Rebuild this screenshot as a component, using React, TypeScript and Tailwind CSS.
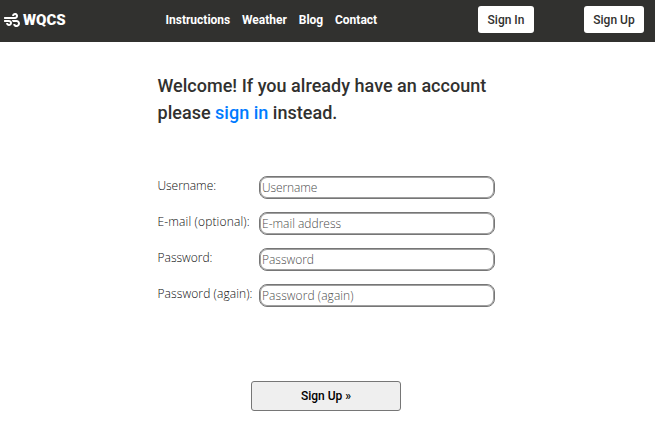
import React from "react";
import { FaWind } from "react-icons/fa";

const links = ["Instructions", "Weather", "Blog", "Contact"];

const fields = [
  { label: "Username:", hint: "Username", type: "text", id: "username", labelSpacing: "tracking-[-0.05px]", hintSpacing: "placeholder:tracking-[-0.1px]" },
  { label: "E-mail (optional):", hint: "E-mail address", type: "email", id: "email", labelSpacing: "tracking-[0.15px]", hintSpacing: "placeholder:tracking-[0px]" },
  { label: "Password:", hint: "Password", type: "password", id: "password", labelSpacing: "tracking-[0px]", hintSpacing: "placeholder:tracking-[-0.02px]" },
  { label: "Password (again):", hint: "Password (again)", type: "password", id: "confirm", labelSpacing: "tracking-[0.1px]", hintSpacing: "placeholder:tracking-[0.07px]" },
];

function Header() {
  return (
    <header className="flex h-[42px] bg-[#31312f] text-white">
      <div className="flex h-10 w-[165.5px] items-center pl-1">
        <FaWind className="h-4 w-4" />
        <span className="ml-[3px] text-[15px] font-black tracking-[0.02px]">WQCS</span>
      </div>
      <nav className="flex h-10 w-[312.5px] items-center gap-[11.8px] text-xs font-bold">
        {links.map((label) => (
          <a key={label} href="#" className="whitespace-nowrap">
            {label}
          </a>
        ))}
      </nav>
      <div className="flex gap-[50px] pt-1.5 text-xs font-medium text-[#31312f]">
        <button className="h-[27px] w-14 rounded-[3px] bg-white">Sign In</button>
        <button className="h-[27px] w-[60px] rounded-[3px] bg-white">Sign Up</button>
      </div>
    </header>
  );
}

export default function App() {
  return (
    <div className="h-[431px] overflow-hidden bg-white font-['Roboto',sans-serif]">
      <Header />
      <main className="pl-[157px] pt-[30px]">
        <h1 className="w-[345px] pl-[0.5px] text-lg font-medium leading-[27px] tracking-[0.02px] text-[#31312f]">
          Welcome! If you already have an account please{" "}
          <a href="#" className="text-[#007bff]">sign in</a> instead.
        </h1>
        <form className="mt-[50px] w-[338px] font-['Open_Sans','Noto_Sans',sans-serif]">
          <div className="flex flex-col gap-[13px]">
            {fields.map((field) => (
              <div key={field.id} className="flex h-[23px]">
                <label htmlFor={field.id} className={"w-[102px] whitespace-nowrap pl-[0.5px] text-xs font-light leading-[19px] text-[#0c0c0c] " + field.labelSpacing}>
                  {field.label}
                </label>
                <input
                  id={field.id}
                  type={field.type}
                  placeholder={field.hint}
                  className={"h-[23px] w-[236px] rounded-lg border border-[#767676] bg-white px-0.5 text-xs font-light shadow-[inset_0_0_0_1px_#a0a0a0] placeholder:text-[#4c4c4c] " + field.hintSpacing}
                />
              </div>
            ))}
          </div>
          <button
            type="button"
            className="ml-[94px] mt-[74px] block h-[30px] w-[150px] rounded-[3px] border border-[#767676] bg-[#efefef] font-['Roboto',sans-serif] text-xs font-medium text-black"
          >
            Sign Up »
          </button>
        </form>
      </main>
    </div>
  );
}
